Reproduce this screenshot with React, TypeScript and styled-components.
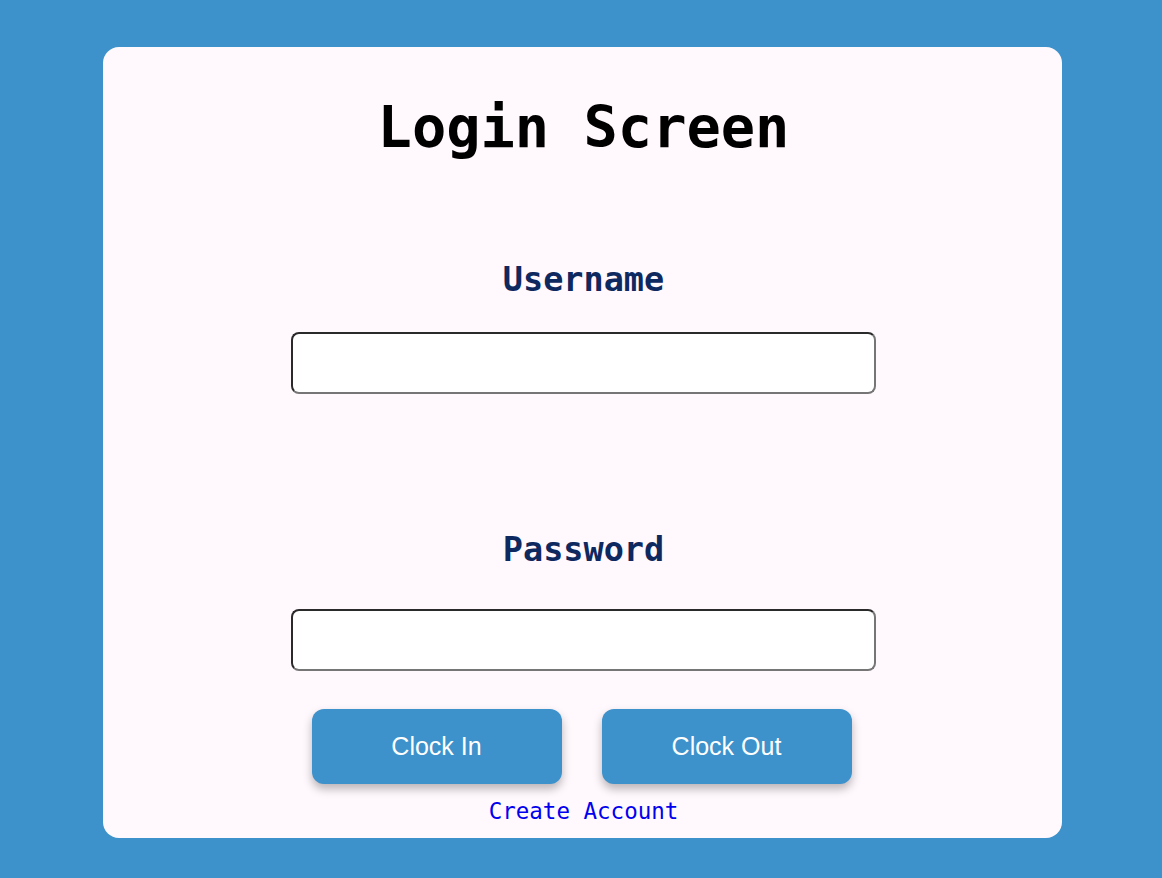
import React from "react";
import styled, { createGlobalStyle } from "styled-components";

const GlobalStyle = createGlobalStyle`
  html, body {
    margin: 0;
    padding: 0;
    background: #3d92cb;
  }
  body {
    font-family: "DejaVu Sans Mono", "Liberation Mono", monospace;
  }
`;

const Page = styled.div`
  min-height: 878px;
  box-sizing: border-box;
  padding: 47px 100px 40px 103px;
  display: flex;
  justify-content: center;
  align-items: flex-start;
`;

const Card = styled.form`
  width: 959px;
  box-sizing: border-box;
  background: #fff8fd;
  border-radius: 16px;
  padding: 48px 0 15px 2px;
  display: flex;
  flex-direction: column;
  align-items: center;
`;

const Title = styled.h1`
  margin: 0;
  font-family: "DejaVu Sans Mono", monospace;
  font-size: 57px;
  line-height: 64px;
  font-weight: 700;
  color: #000;
`;

const Label = styled.label<{ $top: number; $gap: number }>`
  margin-top: ${(p) => p.$top}px;
  margin-bottom: ${(p) => p.$gap}px;
  font-family: "DejaVu Sans Mono", monospace;
  font-size: 33.5px;
  line-height: 40px;
  font-weight: 700;
  color: #0e2860;
`;

const Input = styled.input`
  width: 585px;
  height: 62px;
  box-sizing: border-box;
  border-width: 2px;
  border-style: solid;
  border-color: #2a2a2a #767676 #767676 #2a2a2a;
  border-radius: 8px;
  background: #fff;
  padding: 0 10px;
  font-size: 20px;
  outline: none;
`;

const Buttons = styled.div`
  margin: 38px 4px 0 0;
  display: flex;
  gap: 40px;
`;

const Button = styled.button`
  width: 250px;
  height: 75px;
  border: none;
  border-radius: 12px;
  background: #3d92cb;
  color: #fff;
  font-family: "Liberation Sans", Arial, sans-serif;
  font-size: 25px;
  cursor: pointer;
  box-shadow: 0 5px 10px rgba(0, 0, 0, 0.28);
`;

const Link = styled.a`
  margin-top: 15px;
  font-family: "DejaVu Sans Mono", monospace;
  font-size: 22.5px;
  line-height: 24px;
  color: #0000ee;
  text-decoration: none;
`;

export default function App() {
  return (
    <>
      <GlobalStyle />
      <Page>
        <Card onSubmit={(e) => e.preventDefault()}>
          <Title>Login Screen</Title>
          <Label htmlFor="username" $top={101} $gap={32}>
            Username
          </Label>
          <Input id="username" type="text" />
          <Label htmlFor="password" $top={136} $gap={39}>
            Password
          </Label>
          <Input id="password" type="password" />
          <Buttons>
            <Button type="button">Clock In</Button>
            <Button type="button">Clock Out</Button>
          </Buttons>
          <Link href="#">Create Account</Link>
        </Card>
      </Page>
    </>
  );
}
